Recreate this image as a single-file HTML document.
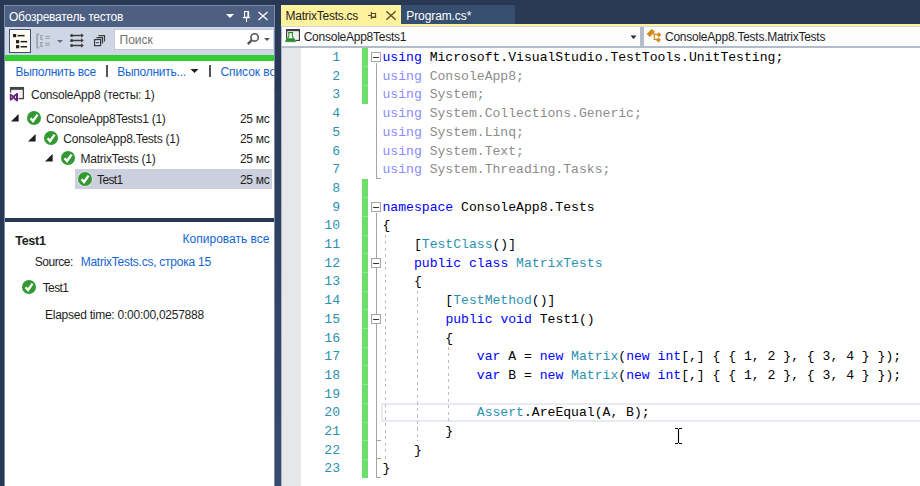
<!DOCTYPE html><html><head><meta charset="utf-8"><style>
*{margin:0;padding:0;box-sizing:border-box}
html,body{width:920px;height:486px;overflow:hidden;background:#293955}
body{position:relative;font-family:"Liberation Sans",sans-serif;font-size:12px;color:#1E1E1E}
.a{position:absolute}
.t{position:absolute;white-space:pre;line-height:14px;font-size:12px;letter-spacing:-0.25px}
.code{position:absolute;white-space:pre;font-family:"Liberation Mono",monospace;font-size:13.1px;line-height:18.7px;color:#000}
.ln{position:absolute;white-space:pre;font-family:"Liberation Mono",monospace;font-size:13.1px;line-height:18.7px;color:#2B91AF;text-align:right;width:40px}
.lnk{color:#1565D2}
</style></head><body>
<div class="a" style="left:0;top:0;width:920px;height:486px;background:linear-gradient(to bottom,#293955 0px,#2A3A57 30px,#384C6C 486px)"></div>
<div class="a" style="left:0;top:0;width:4px;height:486px;background:#293955"></div>
<div class="a" style="left:4px;top:5px;width:271px;height:481px;background:#7B8BAA"></div>
<div class="a" style="left:5px;top:6px;width:269px;height:21px;background:#4D6082"></div>
<div class="a" style="left:5px;top:27px;width:269px;height:28px;background:#CFD6E5"></div>
<div class="a" style="left:5px;top:55px;width:269px;height:6px;background:#33CC33"></div>
<div class="a" style="left:5px;top:61px;width:269px;height:157px;background:#FFFFFF"></div>
<div class="a" style="left:5px;top:218px;width:269px;height:4px;background:#293955"></div>
<div class="a" style="left:5px;top:222px;width:269px;height:264px;background:#FFFFFF"></div>
<div class="t" style="left:9px;top:9.6px;color:#FFFFFF">Обозреватель тестов</div>
<svg class="a" style="left:220px;top:5px" width="55" height="22"><path d="M6 9 L14 9 L10 13 Z" fill="#FFFFFF"/><path d="M24.5 6.5 H28.5 V12.2 H24.5 Z" fill="none" stroke="#FFFFFF" stroke-width="1.1"/><rect x="27.4" y="6" width="1.7" height="6.5" fill="#FFFFFF"/><path d="M22.8 12.6 H30" stroke="#FFFFFF" stroke-width="1.2"/><path d="M26.5 13 V17" stroke="#FFFFFF" stroke-width="1.1"/><path d="M38.5 7 L47.5 15 M47.5 7 L38.5 15" stroke="#FFFFFF" stroke-width="1.3"/></svg>
<div class="a" style="left:9px;top:29px;width:22px;height:24px;background:#FFFCF4;border:1px solid #3E5278"></div>
<svg class="a" style="left:5px;top:27px" width="110" height="28"><rect x="8" y="7" width="3.2" height="3.2" fill="#1E1E1E"/><rect x="12.6" y="7.9" width="7" height="1.5" fill="#1E1E1E"/><rect x="11" y="13.1" width="3.2" height="3.2" fill="#1E1E1E"/><rect x="15.6" y="13.9" width="6.5" height="1.5" fill="#1E1E1E"/><rect x="11" y="18.1" width="3.2" height="3.2" fill="#1E1E1E"/><rect x="15.6" y="19" width="6.5" height="1.5" fill="#1E1E1E"/><path d="M34.2 7.6 H32.1 V20.4 H34.2" fill="none" stroke="#A3A8B3" stroke-width="2"/><path d="M38 8.7 H35.8 V12.3 H38 M38 15.7 H35.8 V19.3 H38" fill="none" stroke="#A3A8B3" stroke-width="1.4"/><path d="M40.1 9.3 H44.9 M40.1 11.5 H44.9 M40.1 16.3 H44.9 M40.1 18.4 H44.9" stroke="#A3A8B3" stroke-width="1.2"/><path d="M52 13 H58 L55 16 Z" fill="#6D6D70"/><circle cx="66.6" cy="8.5" r="1.5" fill="#3C3C3C"/><circle cx="66.6" cy="13.5" r="1.5" fill="#3C3C3C"/><circle cx="66.6" cy="18.5" r="1.5" fill="#3C3C3C"/><path d="M66.6 8.5 H77 M66.6 13.5 H77 M66.6 18.5 H77" stroke="#3C3C3C" stroke-width="1.3"/><path d="M76.2 6.3 L78.8 8.5 L76.2 10.7 Z M76.2 11.3 L78.8 13.5 L76.2 15.7 Z M76.2 16.3 L78.8 18.5 L76.2 20.7 Z" fill="#3C3C3C"/><rect x="89.6" y="12.6" width="6" height="6" fill="#E8EAF2" stroke="#3C3C3C" stroke-width="1.3"/><rect x="91" y="15" width="3.2" height="1.3" fill="#1A5BAA"/><path d="M91.5 10.6 H97.5 V16.6 M93.5 8.6 H99.5 V14.6" fill="none" stroke="#3C3C3C" stroke-width="1.2"/></svg>
<div class="a" style="left:114px;top:29px;width:159px;height:21px;background:#FFFFFF;border:1px solid #C3C8D4;border-right:none"></div>
<div class="t" style="left:119.5px;top:32.7px;color:#717171;letter-spacing:0">Поиск</div>
<svg class="a" style="left:240px;top:28px" width="34" height="24"><circle cx="14.6" cy="9.4" r="3.7" fill="none" stroke="#555555" stroke-width="1.6"/><path d="M11.8 12.2 L7.8 16.2" stroke="#555555" stroke-width="2.4"/><path d="M24 10 H30 L27 13 Z" fill="#555555"/></svg>
<div class="t lnk" style="left:15.4px;top:64.6px">Выполнить все</div>
<div class="a" style="left:106px;top:65px;width:2px;height:12px;background:#555555"></div>
<div class="t lnk" style="left:117.2px;top:64.6px">Выполнить...</div>
<svg class="a" style="left:189.8px;top:68px" width="10" height="6"><path d="M0.5 1 H8.5 L4.5 5 Z" fill="#1E1E1E"/></svg>
<div class="a" style="left:209px;top:65px;width:2px;height:12px;background:#555555"></div>
<div class="t lnk" style="left:220.4px;top:64.6px;letter-spacing:-0.05px">Список воспроизведения</div>
<div class="a" style="left:274px;top:60px;width:1px;height:30px;background:#7B8BAA"></div>
<div class="a" style="left:275px;top:60px;width:6px;height:30px;background:#293955"></div>
<svg class="a" style="left:6px;top:84px" width="24" height="20"><rect x="4.6" y="3.6" width="12.8" height="11" fill="#F3F3F3" stroke="#424242" stroke-width="1.3"/><rect x="4" y="3" width="14" height="2.8" fill="#424242"/><rect x="3" y="8.5" width="9.5" height="9" fill="#FFFFFF"/><path d="M4.6 10.6 L8 13.2 L4.6 15.8 Z" fill="none" stroke="#68217A" stroke-width="1.6" stroke-linejoin="round"/><path d="M10.9 9.8 L7.2 13.2 L10.9 16.6 Z" fill="none" stroke="#68217A" stroke-width="1.8" stroke-linejoin="round"/><rect x="10.2" y="9.4" width="1.8" height="7.6" fill="#68217A"/></svg>
<div class="t" style="left:31px;top:88px">ConsoleApp8 (тесты: 1)</div>
<div class="a" style="left:75px;top:169px;width:197px;height:20px;background:#CCCFDD"></div>
<svg class="a" style="left:11.2px;top:114px" width="9" height="9"><path d="M7.6 0 V7.6 H0 Z" fill="#1E1E1E"/></svg>
<svg class="a" style="left:26px;top:109.8px;overflow:visible" width="16" height="16" viewBox="-1 -1 16 16"><circle cx="7" cy="7" r="7.7" fill="#FFFFFF" fill-opacity="0.55"/><circle cx="7" cy="7" r="7" fill="#339933"/><path d="M3.6 7.3 L6 10 L10.6 3.6" fill="none" stroke="#FFFFFF" stroke-width="2.4"/></svg>
<div class="t" style="left:46.1px;top:112px">ConsoleApp8Tests1 (1)</div>
<div class="t" style="left:239.9px;top:112px">25 мс</div>
<svg class="a" style="left:27.8px;top:134.2px" width="9" height="9"><path d="M7.6 0 V7.6 H0 Z" fill="#1E1E1E"/></svg>
<svg class="a" style="left:43px;top:130.0px;overflow:visible" width="16" height="16" viewBox="-1 -1 16 16"><circle cx="7" cy="7" r="7.7" fill="#FFFFFF" fill-opacity="0.55"/><circle cx="7" cy="7" r="7" fill="#339933"/><path d="M3.6 7.3 L6 10 L10.6 3.6" fill="none" stroke="#FFFFFF" stroke-width="2.4"/></svg>
<div class="t" style="left:63.3px;top:132.2px">ConsoleApp8.Tests (1)</div>
<div class="t" style="left:239.9px;top:132.2px">25 мс</div>
<svg class="a" style="left:44.5px;top:153.8px" width="9" height="9"><path d="M7.6 0 V7.6 H0 Z" fill="#1E1E1E"/></svg>
<svg class="a" style="left:60px;top:149.60000000000002px;overflow:visible" width="16" height="16" viewBox="-1 -1 16 16"><circle cx="7" cy="7" r="7.7" fill="#FFFFFF" fill-opacity="0.55"/><circle cx="7" cy="7" r="7" fill="#339933"/><path d="M3.6 7.3 L6 10 L10.6 3.6" fill="none" stroke="#FFFFFF" stroke-width="2.4"/></svg>
<div class="t" style="left:80.5px;top:151.8px">MatrixTests (1)</div>
<div class="t" style="left:239.9px;top:151.8px">25 мс</div>
<svg class="a" style="left:76.6px;top:170.8px;overflow:visible" width="16" height="16" viewBox="-1 -1 16 16"><circle cx="7" cy="7" r="7.7" fill="#FFFFFF" fill-opacity="0.55"/><circle cx="7" cy="7" r="7" fill="#339933"/><path d="M3.6 7.3 L6 10 L10.6 3.6" fill="none" stroke="#FFFFFF" stroke-width="2.4"/></svg>
<div class="t" style="left:97px;top:173px;letter-spacing:-0.6px">Test1</div>
<div class="t" style="left:239.9px;top:173px">25 мс</div>
<div class="t" style="left:15.2px;top:233.9px;font-weight:bold;font-size:12.5px">Test1</div>
<div class="t lnk" style="left:182.6px;top:232px;letter-spacing:0">Копировать все</div>
<div class="t" style="left:34.7px;top:254.6px;letter-spacing:-0.45px">Source:</div>
<div class="t lnk" style="left:80.7px;top:254.6px">MatrixTests.cs, строка 15</div>
<svg class="a" style="left:20.8px;top:279.2px;overflow:visible" width="16" height="16" viewBox="-1 -1 16 16"><circle cx="7" cy="7" r="7.7" fill="#FFFFFF" fill-opacity="0.55"/><circle cx="7" cy="7" r="7" fill="#339933"/><path d="M3.6 7.3 L6 10 L10.6 3.6" fill="none" stroke="#FFFFFF" stroke-width="2.4"/></svg>
<div class="t" style="left:42.7px;top:281.4px;letter-spacing:-0.6px">Test1</div>
<div class="t" style="left:45px;top:308px">Elapsed time: 0:00:00,0257888</div>
<div class="a" style="left:281px;top:5px;width:120px;height:21px;background:#FFF29D"></div>
<div class="t" style="left:285.6px;top:8.5px;color:#1E1E1E">MatrixTests.cs</div>
<svg class="a" style="left:365px;top:8px" width="36" height="14"><path d="M3 7.5 H6.4 M6.4 4 V11" fill="none" stroke="#5B4B2F" stroke-width="1.2"/><path d="M6.8 5.5 H10.5 V9.3 H6.8" fill="none" stroke="#5B4B2F" stroke-width="1.2"/><rect x="6.5" y="8.6" width="4.6" height="1.4" fill="#5B4B2F"/><path d="M21.3 3.2 L30.7 11.8 M30.7 3.2 L21.3 11.8" stroke="#5B4B2F" stroke-width="1.3"/></svg>
<div class="a" style="left:401px;top:5px;width:114px;height:19px;background:#364E6F"></div>
<div class="t" style="left:406.3px;top:8.5px;color:#FFFFFF;letter-spacing:-0.1px">Program.cs*</div>
<div class="a" style="left:281px;top:24px;width:639px;height:2px;background:#FFF29D"></div>
<div class="a" style="left:281px;top:26px;width:639px;height:22px;background:#B3BCCB"></div>
<div class="a" style="left:281px;top:26px;width:639px;height:1px;background:#D3D9E3"></div>
<div class="a" style="left:282px;top:27px;width:358px;height:19px;background:#FCFCFC"></div>
<div class="a" style="left:644px;top:27px;width:276px;height:19px;background:#FCFCFC"></div>
<svg class="a" style="left:282px;top:26px" width="22" height="20"><rect x="4.65" y="3.65" width="12.7" height="10.7" fill="#FFFFFF" stroke="#3C3C3C" stroke-width="1.3"/><rect x="4" y="3" width="14" height="2.2" fill="#3C3C3C"/><rect x="12" y="6" width="4.6" height="7.6" fill="#EFEFEF"/><path d="M5.6 6 H11.6 V10.2 L14.8 16.4 H2.6 L5.8 10.2 Z" fill="#FFFFFF"/><path d="M5.9 6.6 H11.3 M6.9 6.6 V10.4 L4 15 M10.3 6.6 V10.4 L13.2 15" fill="none" stroke="#2D8A2D" stroke-width="1.15"/><path d="M5.3 12.6 H11.9 L13.9 15.8 H3.3 Z" fill="#2D8A2D" stroke="#2D8A2D" stroke-width="0.5" stroke-linejoin="round"/></svg>
<div class="t" style="left:303.7px;top:29.9px;color:#1E1E1E">ConsoleApp8Tests1</div>
<svg class="a" style="left:630px;top:35px" width="8" height="5"><path d="M0.5 0.5 H6.5 L3.5 4 Z" fill="#1B293E"/></svg>
<svg class="a" style="left:642px;top:26px" width="22" height="20"><path d="M9.9 3.3 L12.5 5.8 L7.8 10.7 L5.1 7.8 Z" fill="#D28A1E" stroke="#D28A1E" stroke-width="0.8" stroke-linejoin="round"/><path d="M11 8.2 H15.5 M12.3 8.2 V13.4 H15.5" fill="none" stroke="#D28A1E" stroke-width="1.2"/><path d="M16.9 6.6 L19 8.8 L16.9 11 L14.7 8.8 Z M16.4 11.8 L18.6 14 L16.4 16.2 L14.2 14 Z" fill="#D28A1E" stroke="#D28A1E" stroke-width="0.6" stroke-linejoin="round"/></svg>
<div class="t" style="left:665px;top:29.9px;color:#1E1E1E">ConsoleApp8.Tests.MatrixTests</div>
<div class="a" style="left:281px;top:48px;width:639px;height:438px;background:#FFFFFF"></div>
<div class="a" style="left:281px;top:48px;width:20px;height:438px;background:#E6E7E8"></div>
<div class="a" style="left:281px;top:48px;width:1px;height:438px;background:#A9B3C8"></div>
<div class="a" style="left:362px;top:48.00px;width:6px;height:56.10px;background:#6CDE6C"></div>
<div class="a" style="left:362px;top:66.20px;width:6px;height:1px;background:#8EE58E"></div>
<div class="a" style="left:362px;top:84.90px;width:6px;height:1px;background:#8EE58E"></div>
<div class="a" style="left:362px;top:178.90px;width:6px;height:299.20px;background:#6CDE6C"></div>
<div class="a" style="left:362px;top:197.10px;width:6px;height:1px;background:#8EE58E"></div>
<div class="a" style="left:362px;top:215.80px;width:6px;height:1px;background:#8EE58E"></div>
<div class="a" style="left:362px;top:234.50px;width:6px;height:1px;background:#8EE58E"></div>
<div class="a" style="left:362px;top:253.20px;width:6px;height:1px;background:#8EE58E"></div>
<div class="a" style="left:362px;top:271.90px;width:6px;height:1px;background:#8EE58E"></div>
<div class="a" style="left:362px;top:290.60px;width:6px;height:1px;background:#8EE58E"></div>
<div class="a" style="left:362px;top:309.30px;width:6px;height:1px;background:#8EE58E"></div>
<div class="a" style="left:362px;top:328.00px;width:6px;height:1px;background:#8EE58E"></div>
<div class="a" style="left:362px;top:346.70px;width:6px;height:1px;background:#8EE58E"></div>
<div class="a" style="left:362px;top:365.40px;width:6px;height:1px;background:#8EE58E"></div>
<div class="a" style="left:362px;top:384.10px;width:6px;height:1px;background:#8EE58E"></div>
<div class="a" style="left:362px;top:402.80px;width:6px;height:1px;background:#8EE58E"></div>
<div class="a" style="left:362px;top:421.50px;width:6px;height:1px;background:#8EE58E"></div>
<div class="a" style="left:362px;top:440.20px;width:6px;height:1px;background:#8EE58E"></div>
<div class="a" style="left:362px;top:458.90px;width:6px;height:1px;background:#8EE58E"></div>
<div class="a" style="left:381px;top:403.30px;width:539px;height:18.70px;border:2px solid #EAEAF2;border-right:none"></div>
<div class="a" style="left:385.0px;top:235.00px;width:1px;height:224.40px;background:repeating-linear-gradient(to bottom,#BDBDBD 0 3px,transparent 3px 6.5px)"></div>
<div class="a" style="left:417.0px;top:291.10px;width:1px;height:149.60px;background:repeating-linear-gradient(to bottom,#BDBDBD 0 3px,transparent 3px 6.5px)"></div>
<div class="a" style="left:448.0px;top:347.20px;width:1px;height:74.80px;background:repeating-linear-gradient(to bottom,#BDBDBD 0 3px,transparent 3px 6.5px)"></div>
<div class="a" style="left:376px;top:63.40px;width:1px;height:114.90px;background:#A5A5A5"></div>
<div class="a" style="left:376px;top:177.90px;width:5px;height:1px;background:#A5A5A5"></div>
<div class="a" style="left:376px;top:213.00px;width:1px;height:264.50px;background:#A5A5A5"></div>
<div class="a" style="left:376px;top:477.10px;width:5px;height:1px;background:#A5A5A5"></div>
<div class="a" style="left:376px;top:458.40px;width:5px;height:1px;background:#A5A5A5"></div>
<div class="a" style="left:376px;top:439.70px;width:5px;height:1px;background:#A5A5A5"></div>
<div class="a" style="left:371px;top:52.00px;width:10px;height:10px;border:1px solid #A5A5A5;background:#fff"></div>
<div class="a" style="left:373px;top:57.20px;width:6px;height:1px;background:#3A3A3A"></div>
<div class="a" style="left:371px;top:201.60px;width:10px;height:10px;border:1px solid #A5A5A5;background:#fff"></div>
<div class="a" style="left:373px;top:206.80px;width:6px;height:1px;background:#3A3A3A"></div>
<div class="a" style="left:371px;top:257.70px;width:10px;height:10px;border:1px solid #A5A5A5;background:#fff"></div>
<div class="a" style="left:373px;top:262.90px;width:6px;height:1px;background:#3A3A3A"></div>
<div class="a" style="left:371px;top:313.80px;width:10px;height:10px;border:1px solid #A5A5A5;background:#fff"></div>
<div class="a" style="left:373px;top:319.00px;width:6px;height:1px;background:#3A3A3A"></div>
<div class="ln" style="left:300px;top:49.0px">1
2
3
4
5
6
7
8
9
10
11
12
13
14
15
16
17
18
19
20
21
22
23</div>
<div class="code" style="left:382.5px;top:49.0px"><span style="color:#0000FF">using</span> Microsoft.VisualStudio.TestTools.UnitTesting;
<span style="color:#8A8AFF">using</span><span style="color:#8C8C8C"> ConsoleApp8;</span>
<span style="color:#8A8AFF">using</span><span style="color:#8C8C8C"> System;</span>
<span style="color:#8A8AFF">using</span><span style="color:#8C8C8C"> System.Collections.Generic;</span>
<span style="color:#8A8AFF">using</span><span style="color:#8C8C8C"> System.Linq;</span>
<span style="color:#8A8AFF">using</span><span style="color:#8C8C8C"> System.Text;</span>
<span style="color:#8A8AFF">using</span><span style="color:#8C8C8C"> System.Threading.Tasks;</span>

<span style="color:#0000FF">namespace</span> ConsoleApp8.Tests
{
    [<span style="color:#2B91AF">TestClass</span>()]
    <span style="color:#0000FF">public</span> <span style="color:#0000FF">class</span> <span style="color:#2B91AF">MatrixTests</span>
    {
        [<span style="color:#2B91AF">TestMethod</span>()]
        <span style="color:#0000FF">public</span> <span style="color:#0000FF">void</span> Test1()
        {
            <span style="color:#0000FF">var</span> A = <span style="color:#0000FF">new</span> <span style="color:#2B91AF">Matrix</span>(<span style="color:#0000FF">new</span> <span style="color:#0000FF">int</span>[,] { { 1, 2 }, { 3, 4 } });
            <span style="color:#0000FF">var</span> B = <span style="color:#0000FF">new</span> <span style="color:#2B91AF">Matrix</span>(<span style="color:#0000FF">new</span> <span style="color:#0000FF">int</span>[,] { { 1, 2 }, { 3, 4 } });

            <span style="color:#2B91AF">Assert</span>.AreEqual(A, B);
        }
    }
}</div>
<svg class="a" style="left:674px;top:427px" width="10" height="18"><path d="M1 1.5 H4 M5 1.5 H8 M1 16.5 H4 M5 16.5 H8 M4.5 2 V16" stroke="#000" stroke-width="1.1" fill="none"/></svg>
</body></html>
